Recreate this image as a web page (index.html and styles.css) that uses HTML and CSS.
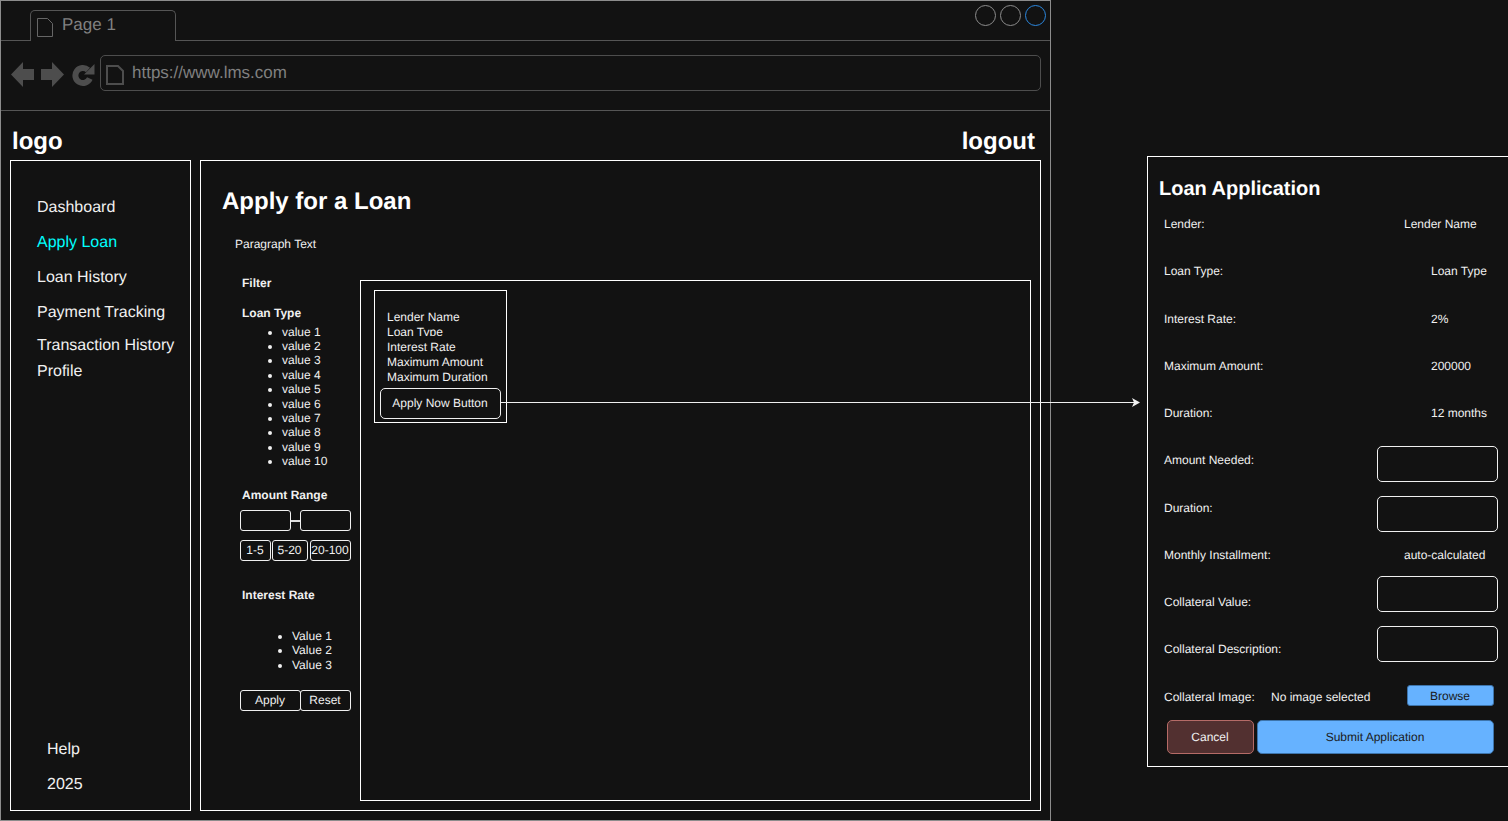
FILE: index.html
```html
<!DOCTYPE html>
<html lang="en">
<head>
  <meta charset="UTF-8" />
  <meta name="viewport" content="width=device-width, initial-scale=1" />
  <title>LMS - Apply for a Loan</title>
  <link rel="stylesheet" href="styles.css">
</head>
<body>
  <div class="canvas">
    <div class="browser">
      <div class="tab-bar">
        <div class="tab">
          <svg class="tab-icon" viewBox="0 0 16 19"><path d="M.5.5H10.5L15.5 5.5V18.5H.5Z"/></svg>
          <span>Page 1</span>
        </div>
        <div class="win-controls">
          <span class="win-dot"></span>
          <span class="win-dot"></span>
          <span class="win-dot win-dot-active"></span>
        </div>
      </div>

      <div class="tool-bar">
        <svg class="nav-icon nav-back" viewBox="0 0 23 25"><path d="M0 12.5 12 0V7H23V18H12V25Z"/></svg>
        <svg class="nav-icon nav-forward" viewBox="0 0 23 25"><path d="M23 12.5 11 0V7H0V18H11V25Z"/></svg>
        <svg class="nav-icon nav-reload" viewBox="0 0 23 23"><path class="reload-arc" d="M16 6A7.5 7.5 0 1 0 17.8 14.5"/><path d="M22.5 0V10.5H12Z"/></svg>
        <div class="address">
          <svg class="address-icon" viewBox="0 0 18 20"><path d="M1 1H12L17 6V19H1Z"/></svg>
          <span>https://www.lms.com</span>
        </div>
      </div>

      <header class="site-head">
        <span>logo</span>
        <span>logout</span>
      </header>

      <div class="site-body">
        <aside class="sidebar">
          <a class="side-link">Dashboard</a>
          <a class="side-link side-link-active">Apply Loan</a>
          <a class="side-link">Loan History</a>
          <a class="side-link">Payment Tracking</a>
          <a class="side-link side-link-tight side-link-gap">Transaction History</a>
          <a class="side-link side-link-tight">Profile</a>
          <div class="side-foot">
            <a class="side-link">Help</a>
            <a class="side-link">2025</a>
          </div>
        </aside>

        <main class="content">
          <div class="content-head">
            <h1>Apply for a Loan</h1>
            <p>Paragraph Text</p>
          </div>
          <div class="content-body">
            <section class="filter">
              <h4>Filter</h4>
              <h4 class="filter-type">Loan Type</h4>
              <ul class="value-list">
                <li>value 1</li>
                <li>value 2</li>
                <li>value 3</li>
                <li>value 4</li>
                <li>value 5</li>
                <li>value 6</li>
                <li>value 7</li>
                <li>value 8</li>
                <li>value 9</li>
                <li>value 10</li>
              </ul>
              <h4 class="filter-amount">Amount Range</h4>
              <div class="range">
                <span class="box range-input"></span>
                <span class="range-dash"></span>
                <span class="box range-input"></span>
              </div>
              <div class="presets">
                <button class="box preset-a">1-5</button>
                <button class="box preset-b">5-20</button>
                <button class="box preset-c">20-100</button>
              </div>
              <h4 class="filter-rate">Interest Rate</h4>
              <ul class="value-list value-list-rate">
                <li>Value 1</li>
                <li>Value 2</li>
                <li>Value 3</li>
              </ul>
              <div class="filter-actions">
                <button class="box action-apply">Apply</button>
                <button class="box action-reset">Reset</button>
              </div>
            </section>

            <section class="results">
              <div class="loan-card">
                <div class="card-line">Lender Name</div>
                <div class="card-line card-line-cut">Loan Type</div>
                <div class="card-line">Interest Rate</div>
                <div class="card-line">Maximum Amount</div>
                <div class="card-line">Maximum Duration</div>
                <button class="apply-now">Apply Now Button</button>
              </div>
            </section>
          </div>
        </main>
      </div>
    </div>

    <section class="panel">
      <h2>Loan Application</h2>
      <div class="form-rows">
        <div class="form-row"><span>Lender:</span><span class="val-wide">Lender Name</span></div>
        <div class="form-row"><span>Loan Type:</span><span class="val">Loan Type</span></div>
        <div class="form-row"><span>Interest Rate:</span><span class="val">2%</span></div>
        <div class="form-row"><span>Maximum Amount:</span><span class="val">200000</span></div>
        <div class="form-row"><span>Duration:</span><span class="val">12 months</span></div>
        <div class="form-row"><span>Amount Needed:</span><span class="field field-amount"></span></div>
        <div class="form-row"><span>Duration:</span><span class="field field-duration"></span></div>
        <div class="form-row"><span>Monthly Installment:</span><span class="val-wide">auto-calculated</span></div>
        <div class="form-row"><span>Collateral Value:</span><span class="field field-value"></span></div>
        <div class="form-row"><span>Collateral Description:</span><span class="field field-desc"></span></div>
        <div class="form-row form-row-image">
          <span>Collateral Image:</span>
          <span>No image selected</span>
          <button class="browse">Browse</button>
        </div>
      </div>
      <div class="form-actions">
        <button class="cancel">Cancel</button>
        <button class="submit">Submit Application</button>
      </div>
    </section>

    <!-- connector from the apply button to the form -->
    <svg class="connector" viewBox="0 0 1508 821">
      <path class="connector-line" d="M500 402.5H1134"/>
      <path class="connector-head" d="M1140 402.5 1132 398 1134 402.5 1132 407Z"/>
    </svg>
  </div>
</body>
</html>
```
FILE: styles.css
```css
* {
  box-sizing: border-box;
}
html, body {
  margin: 0;
  height: 100%;
  overflow: hidden;
  background-color: #121212;
}
body {
  font-family: "Liberation Sans", Arial, sans-serif;
  font-size: 12px;
  color: #f0f0f0;
  text-rendering: geometricPrecision;
}
button {
  font-family: inherit;
  font-size: 12px;
  text-rendering: inherit;
  padding: 0 1px 2px 0;
  cursor: pointer;
}
.canvas {
  position: relative;
  display: flex;
  align-items: flex-start;
  width: 1508px;
  height: 821px;
}

/* browser window */
.browser {
  width: 1051px;
  height: 821px;
  border: 1px solid #8c8c8c;
  flex-shrink: 0;
}
.tab-bar {
  display: flex;
  align-items: flex-start;
  height: 40px;
  border-bottom: 1px solid #555;
  padding-right: 4px;
}
.tab {
  display: flex;
  align-items: flex-start;
  gap: 9px;
  width: 146px;
  height: 31px;
  margin: 9px 0 0 29px;
  padding: 5px 0 0 6px;
  background-color: #121212;
  border: 1px solid #555;
  border-bottom: none;
  border-radius: 5px 5px 0 0;
  font-size: 17px;
  line-height: 17px;
  color: #808080;
}
.tab-icon {
  width: 16px;
  height: 19px;
  margin-top: 2px;
  fill: none;
  stroke: #666;
}
.win-controls {
  display: flex;
  gap: 4px;
  margin: 4px 0 0 auto;
}
.win-dot {
  width: 21px;
  height: 21px;
  border: 1px solid #8c8c8c;
  border-radius: 50%;
}
.win-dot-active {
  border-color: #2b87de;
}
.tool-bar {
  display: flex;
  align-items: flex-start;
  height: 70px;
  padding: 14px 0 0 10px;
  border-bottom: 1px solid #555;
}
.nav-icon {
  fill: #4d4d4d;
  width: 23px;
}
.nav-back, .nav-forward {
  height: 25px;
  margin-top: 7px;
}
.nav-forward {
  margin-left: 7px;
}
.nav-reload {
  height: 23px;
  margin: 9px 0 0 8px;
}
.reload-arc {
  fill: none;
  stroke: #4d4d4d;
  stroke-width: 6;
}
.address {
  display: flex;
  align-items: center;
  gap: 8px;
  width: 941px;
  height: 36px;
  margin-left: 5px;
  padding-left: 5px;
  border: 1px solid #4d4d4d;
  border-radius: 5px;
  font-size: 17px;
  color: #808080;
}
.address-icon {
  width: 18px;
  height: 20px;
  margin-top: 3px;
  fill: none;
  stroke: #4d4d4d;
  stroke-width: 2;
}

/* page header */
.site-head {
  display: flex;
  justify-content: space-between;
  height: 49px;
  padding: 17px 15px 0 11px;
  font-size: 24px;
  line-height: 28px;
  font-weight: bold;
  color: #fff;
}
.site-body {
  display: flex;
  gap: 9px;
  padding-left: 9px;
}

/* side menu */
.sidebar {
  display: flex;
  flex-direction: column;
  width: 181px;
  height: 651px;
  padding: 29px 0 8px 26px;
  border: 1px solid #fff;
  font-size: 16px;
}
.side-link {
  display: block;
  line-height: 35px;
}
.side-link-active {
  color: #00ffff;
}
.side-link-tight {
  line-height: 26px;
}
.side-link-gap {
  margin-top: 3px;
}
.side-foot {
  margin-top: auto;
  padding-left: 10px;
}

/* main area */
.content {
  width: 841px;
  height: 651px;
  border: 1px solid #fff;
}
.content-head {
  height: 115px;
  padding: 27px 0 0 21px;
}
.content-head h1 {
  margin: 0;
  font-size: 24px;
  line-height: 28px;
  color: #fff;
}
.content-head p {
  margin: 21px 0 0 13px;
  line-height: 14px;
}
.content-body {
  display: flex;
  gap: 9px;
  padding-left: 39px;
}

/* filter column */
.filter {
  width: 111px;
}
.filter h4 {
  margin: 0 0 0 2px;
  font-size: 12px;
  line-height: 14px;
}
.filter .filter-type {
  margin-top: 16px;
}
.filter .filter-amount {
  margin-top: 19.5px;
}
.filter .filter-rate {
  margin-top: 27px;
}
.value-list {
  margin: 4.5px 0 0;
  padding: 0 0 0 42px;
  width: 111px;
  line-height: 14.4px;
  list-style: disc;
}
.value-list-rate {
  margin-top: 27px;
  padding-left: 52px;
}
.box {
  display: block;
  height: 21px;
  background: transparent;
  border: 1px solid #f0f0f0;
  border-radius: 3px;
  color: #f0f0f0;
  text-align: center;
}
.range {
  display: flex;
  align-items: center;
  margin-top: 8px;
}
.range-input {
  width: 51px;
}
.range-dash {
  width: 9px;
  height: 2px;
  background-color: #ddd;
}
.presets {
  display: flex;
  margin-top: 9px;
}
.preset-a {
  width: 31px;
}
.preset-b {
  width: 36px;
  margin-left: 1px;
}
.preset-c {
  width: 41px;
  margin-left: 2px;
}
.filter-actions {
  display: flex;
  margin-top: 18px;
}
.action-apply {
  width: 61px;
}
.action-reset {
  width: 51px;
  margin-left: -1px;
}

/* loan results */
.results {
  width: 671px;
  height: 521px;
  margin-top: 4px;
  padding: 9px 0 0 13px;
  border: 1px solid #fff;
}
.loan-card {
  width: 133px;
  height: 133px;
  padding: 16px 0 0 5px;
  border: 1px solid #fff;
}
.card-line {
  height: 15px;
  line-height: 20px;
  margin-left: 7px;
  white-space: nowrap;
}
/* descenders of this line are cut off in the mockup */
.card-line-cut {
  height: 14px;
  margin-bottom: 1px;
  overflow: hidden;
}
.apply-now {
  display: block;
  width: 121px;
  height: 31px;
  margin-top: 6px;
  background: transparent;
  border: 1px solid #f0f0f0;
  border-radius: 5px;
  color: #f0f0f0;
}

/* application form */
.panel {
  width: 361px;
  height: 611px;
  margin: 156px 0 0 96px;
  flex-shrink: 0;
  border: 1px solid #fff;
  border-right: none;
}
.panel h2 {
  margin: 20px 0 0 11px;
  font-size: 20px;
  line-height: 24px;
  color: #fff;
}
.form-rows {
  display: grid;
  grid-auto-rows: 47.25px;
  height: 519.75px;
  margin-top: -0.5px;
}
.form-row {
  display: grid;
  grid-template-columns: 213px 27px 27px 1fr;
  align-items: center;
  padding-left: 16px;
}
.val {
  grid-column: 4;
}
.val-wide {
  grid-column: 3 / 5;
}
.field {
  grid-column: 2 / 5;
  display: block;
  width: 121px;
  height: 36px;
  border: 1px solid #f0f0f0;
  border-radius: 5px;
}
.field-amount {
  margin-top: 8px;
}
.field-duration {
  margin-top: 12px;
}
.field-value {
  margin-top: -16px;
}
.field-desc {
  margin-top: -11px;
}
.form-row-image {
  grid-template-columns: 107px 136px 87px;
}
.browse {
  width: 87px;
  height: 21px;
  padding-bottom: 0;
  margin-bottom: 2px;
  background-color: #66b2ff;
  border: 1px solid #3d74ab;
  border-radius: 3px;
  color: #1a1a1a;
}
.form-actions {
  display: flex;
  gap: 3px;
  margin-left: 19px;
}
.form-actions button {
  height: 34px;
  padding-bottom: 0;
  border-radius: 5px;
}
.cancel {
  width: 87px;
  background-color: #523030;
  border: 1px solid #b56b67;
  color: #f0f0f0;
}
.submit {
  width: 237px;
  background-color: #66b2ff;
  border: 1px solid #3d74ab;
  color: #1a1a1a;
}

/* arrow lies over the window and the gap */
.connector {
  position: absolute;
  top: 0;
  left: 0;
  width: 1508px;
  height: 821px;
  pointer-events: none;
}
.connector-line {
  fill: none;
  stroke: #f0f0f0;
  stroke-width: 1;
}
.connector-head {
  fill: #f0f0f0;
}
```
